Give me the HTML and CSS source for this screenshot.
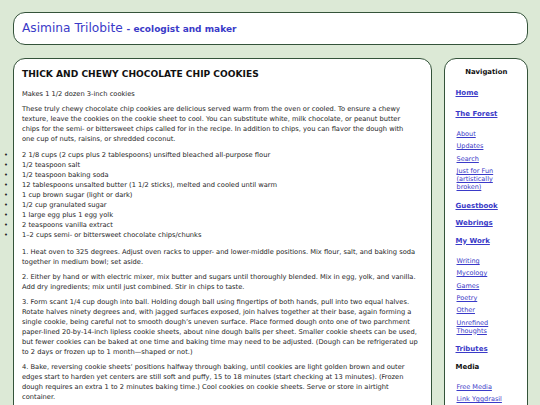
FILE: index.html
```html
<!DOCTYPE html>
<html lang="en">

<head>
  <meta name="viewport" content="width=device-width, initial-scale=1.0" />
  <title>Thick and Chewy Chocolate Chip Cookies</title>
  <link rel="stylesheet" href="styles.css">
</head>

<body>
  <header class="site-header">
    <h1>Asimina Trilobite <span class="tagline">- ecologist and maker</span></h1>
  </header>

  <div class="layout">
    <main class="panel recipe">
      <h2>THICK AND CHEWY CHOCOLATE CHIP COOKIES</h2>
      <p>Makes 1 1/2 dozen 3-inch cookies</p>
      <p class="intro">These truly chewy chocolate chip cookies are delicious served warm from the oven or cooled. To ensure a chewy
        texture, leave the cookies on the cookie sheet to cool. You can substitute white, milk chocolate, or peanut butter
        chips for the semi- or bittersweet chips called for in the recipe. In addition to chips, you can flavor the dough with one
        cup of nuts, raisins, or shredded coconut.</p>
      <ul class="ingredients">
        <li>2 1/8 cups (2 cups plus 2 tablespoons) unsifted bleached all-purpose flour</li>
        <li>1/2 teaspoon salt</li>
        <li>1/2 teaspoon baking soda</li>
        <li>12 tablespoons unsalted butter (1 1/2 sticks), melted and cooled until warm</li>
        <li>1 cup brown sugar (light or dark)</li>
        <li>1/2 cup granulated sugar</li>
        <li>1 large egg plus 1 egg yolk</li>
        <li>2 teaspoons vanilla extract</li>
        <li>1–2 cups semi- or bittersweet chocolate chips/chunks</li>
      </ul>
      <p>1. Heat oven to 325 degrees. Adjust oven racks to upper- and lower-middle positions. Mix flour, salt, and baking soda
        together in medium bowl; set aside.</p>
      <p>2. Either by hand or with electric mixer, mix butter and sugars until thoroughly blended. Mix in egg, yolk, and vanilla.
        Add dry ingredients; mix until just combined. Stir in chips to taste.</p>
      <p>3. Form scant 1/4 cup dough into ball. Holding dough ball using fingertips of both hands, pull into two equal halves.
        Rotate halves ninety degrees and, with jagged surfaces exposed, join halves together at their base, again forming a
        single cookie, being careful not to smooth dough’s uneven surface. Place formed dough onto one of two parchment
        paper-lined 20-by-14-inch lipless cookie sheets, about nine dough balls per sheet. Smaller cookie sheets can be used,
        but fewer cookies can be baked at one time and baking time may need to be adjusted. (Dough can be refrigerated up
        to 2 days or frozen up to 1 month—shaped or not.)</p>
      <p>4. Bake, reversing cookie sheets’ positions halfway through baking, until cookies are light golden brown and outer
        edges start to harden yet centers are still soft and puffy, 15 to 18 minutes (start checking at 13 minutes). (Frozen
        dough requires an extra 1 to 2 minutes baking time.) Cool cookies on cookie sheets. Serve or store in airtight
        container.</p>
    </main>

    <nav class="panel sidebar">
      <h3>Navigation</h3>
      <a class="nav-link home" href="#">Home</a>
      <a class="nav-link" href="#">The Forest</a>
      <ul class="sub-links">
        <li><a href="#">About</a></li>
        <li><a href="#">Updates</a></li>
        <li><a href="#">Search</a></li>
        <li><a href="#">Just for Fun (artistically broken)</a></li>
      </ul>
      <a class="nav-link" href="#">Guestbook</a>
      <a class="nav-link" href="#">Webrings</a>
      <a class="nav-link" href="#">My Work</a>
      <ul class="sub-links">
        <li><a href="#">Writing</a></li>
        <li><a href="#">Mycology</a></li>
        <li><a href="#">Games</a></li>
        <li><a href="#">Poetry</a></li>
        <li><a href="#">Other</a></li>
        <li><a href="#">Unrefined Thoughts</a></li>
      </ul>
      <a class="nav-link" href="#">Tributes</a>
      <span class="nav-link label">Media</span>
      <ul class="sub-links">
        <li><a href="#">Free Media</a></li>
        <li><a href="#">Link Yggdrasil</a></li>
      </ul>
    </nav>
  </div>
</body>

</html>
```
FILE: styles.css
```css
* {
  padding: 0;
  margin: 0;
  box-sizing: border-box;
}

body {
  background-color: #dce9d6;
  color: #1e1e1e;
  font-family: "DejaVu Sans", sans-serif;
  font-size: 6.7px;
  line-height: 10px;
  padding: 12px 12px 0 13px;
}

a {
  color: #3a3ac8;
}

.site-header,
.panel {
  background-color: #fff;
  border: 1.5px solid #34533a;
  border-radius: 12px;
}

.site-header {
  padding: 8px 8px;
  margin-bottom: 13px;
}

.site-header h1 {
  color: #3a3ac8;
  font-size: 12.2px;
  font-weight: normal;
  line-height: 14px;
}

.tagline {
  font-size: 9px;
  font-weight: bold;
}

.layout {
  display: grid;
  grid-template-columns: 1fr 84px;
  gap: 12px;
}

/* recipe column */
.recipe {
  padding: 10px 9px 10px 8px;
  min-height: 400px;
}

.recipe h2 {
  font-size: 9.1px;
  line-height: 11px;
  margin-bottom: 9px;
  color: #111;
}

.recipe p {
  margin-bottom: 5.3px;
}

.recipe .intro {
  max-width: 384px;
}

.ingredients {
  list-style: none;
  margin-bottom: 7px;
}

.ingredients li::before {
  content: "•";
  display: inline-block;
  width: 18px;
  margin-left: -18px;
}

/* sidebar */
.sidebar {
  padding: 8px 10px 8px 10.5px;
}

.sidebar h3 {
  text-align: center;
  font-size: 6.9px;
  line-height: 10px;
  margin-bottom: 11.7px;
  color: #111;
}

.nav-link {
  display: block;
  font-size: 7px;
  font-weight: bold;
  line-height: 9px;
  margin-bottom: 8.5px;
}

.nav-link.home {
  margin-bottom: 12px;
}

.nav-link.label {
  color: #111;
}

.sub-links {
  list-style: none;
  margin: 11.5px 0 10.5px 1px;
}

.sub-links li {
  font-size: 6.5px;
  line-height: 8px;
  margin-bottom: 4.3px;
}
```
